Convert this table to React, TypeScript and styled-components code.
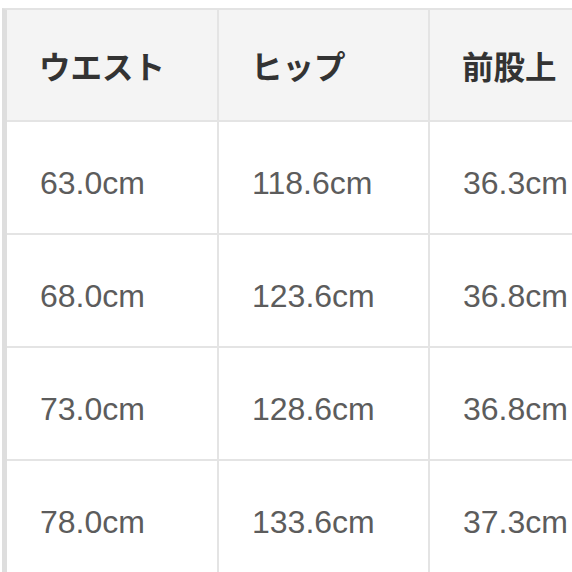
import React from 'react';
import styled, { createGlobalStyle } from 'styled-components';

const GlobalStyle = createGlobalStyle`
  html, body {
    margin: 0;
    padding: 0;
    background: #ffffff;
    overflow: hidden;
  }
`;

const HEADERS = ['ウエスト', 'ヒップ', '前股上'];

const ROWS = [
  ['63.0cm', '118.6cm', '36.3cm'],
  ['68.0cm', '123.6cm', '36.8cm'],
  ['73.0cm', '128.6cm', '36.8cm'],
  ['78.0cm', '133.6cm', '37.3cm'],
];

export default function App() {
  return (
    <Page>
      <GlobalStyle />
      <Table>
        {HEADERS.map((label) => (
          <Cell key={label} $head>
            {label}
          </Cell>
        ))}
        {ROWS.map((row, i) =>
          row.map((value, j) => <Cell key={`${i}-${j}`}>{value}</Cell>)
        )}
      </Table>
    </Page>
  );
}

const Page = styled.div`
  width: 572px;
  height: 572px;
  padding: 8px 0 0 2px;
  box-sizing: border-box;
  overflow: hidden;
`;

const Table = styled.div`
  display: grid;
  grid-template-columns: 212px 211px 211px;
  grid-template-rows: 112px repeat(4, 113px);
  width: max-content;
  border-top: 2px solid #e3e3e3;
  border-left: 5px solid #dedede;
`;

const Cell = styled.div<{ $head?: boolean }>`
  display: flex;
  align-items: center;
  padding: ${(p) => (p.$head ? '0 0 0 32px' : '11px 0 0 33px')};
  box-sizing: border-box;
  border-right: 2px solid #e4e4e4;
  border-bottom: 2px solid #e4e4e4;
  background: ${(p) => (p.$head ? '#f4f4f4' : '#ffffff')};
  color: ${(p) => (p.$head ? '#333333' : '#5c5c5c')};
  font-family: ${(p) =>
    p.$head
      ? '"Noto Sans CJK JP", sans-serif'
      : '"Liberation Sans", Arial, sans-serif'};
  font-weight: ${(p) => (p.$head ? 700 : 400)};
  font-size: ${(p) => (p.$head ? '31.5px' : '32px')};
  white-space: nowrap;
`;
